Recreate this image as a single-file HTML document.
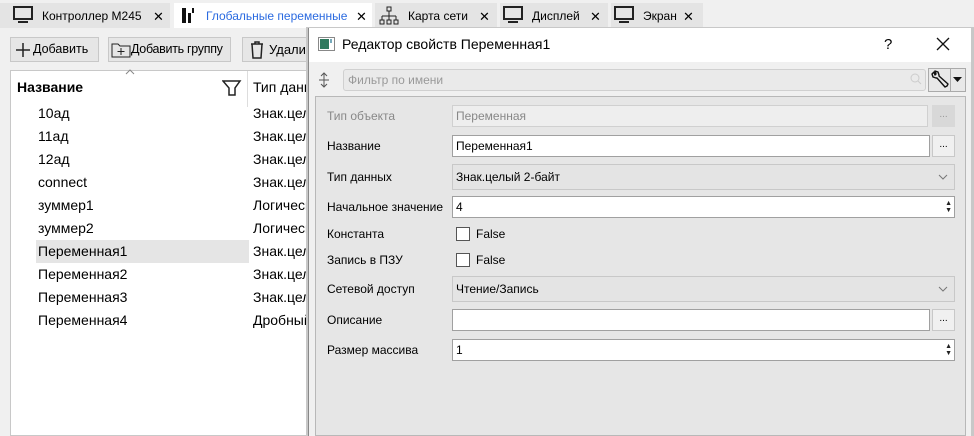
<!DOCTYPE html>
<html><head><meta charset="utf-8"><style>
*{box-sizing:border-box;margin:0;padding:0}
body{width:974px;height:436px;overflow:hidden;background:#f0f0f0;font-family:"Liberation Sans","DejaVu Sans",sans-serif;font-size:13px;color:#000;position:relative}
.abs{position:absolute}
.tab{position:absolute;top:3px;height:25px;background:#e4e4e4;font-size:12px;white-space:nowrap}
.tab span{position:absolute;top:6px}
.x{font-weight:bold;font-size:13px}
.btn{position:absolute;top:37px;height:25px;border:1px solid #c8c8c8;background:#e6e6e6;font-size:13px;line-height:23px;white-space:nowrap;overflow:hidden}
.btn span.t{position:absolute;top:0}
.row{position:absolute;left:38px;font-size:14px}
.c2{position:absolute;left:253px;font-size:14px}
.lbl{position:absolute;left:327px;font-size:12px}
.fld{position:absolute;left:452px;height:22px;border:1px solid #a0a0a0;background:#fff;font-size:12px;padding-left:3px;line-height:20px}
.dots{position:absolute;left:932px;width:23px;height:22px;border:1px solid #c8c8c8;background:#f0f0f0;font-size:10px;text-align:center;line-height:18px}
.cb{position:absolute;left:456px;width:14px;height:14px;border:1px solid #555;background:#fff}
.spin{position:absolute;right:2px;top:3px;font-size:7px;line-height:7px;color:#222}
</style></head><body>
<div class="abs" style="left:0;top:0;width:974px;height:28px;background:#f0f0f0"></div>
<div class="tab" style="left:0;width:170px">
<svg class="abs" style="left:12px;top:3px" width="22" height="18"><rect x="2" y="1" width="18" height="12" fill="none" stroke="#222" stroke-width="2"/><rect x="6" y="15" width="10" height="2" fill="#222"/></svg>
<span style="left:42px">Контроллер M245</span><span class="x" style="left:153px">✕</span></div>
<div class="tab" style="left:174px;width:198px;background:#fff">
<svg class="abs" style="left:6px;top:4px" width="16" height="18"><rect x="2" y="1" width="4" height="15" fill="#111"/><rect x="8" y="6" width="3" height="10" fill="#111"/><rect x="12" y="1" width="2" height="5" fill="#111"/></svg>
<span style="left:32px;color:#2a6ae0">Глобальные переменные</span><span class="x" style="left:182px">✕</span></div>
<div class="tab" style="left:375px;width:122px">
<svg class="abs" style="left:4px;top:3px" width="20" height="20"><rect x="8" y="1" width="4" height="4" fill="none" stroke="#222"/><path d="M10 5v5M3 10h14M3 10v4M10 10v4M17 10v4" stroke="#222" fill="none"/><rect x="1" y="14" width="4" height="4" fill="none" stroke="#222"/><rect x="8" y="14" width="4" height="4" fill="none" stroke="#222"/><rect x="15" y="14" width="4" height="4" fill="none" stroke="#222"/></svg>
<span style="left:33px">Карта сети</span><span class="x" style="left:104px">✕</span></div>
<div class="tab" style="left:500px;width:108px">
<svg class="abs" style="left:2px;top:3px" width="22" height="18"><rect x="2" y="1" width="18" height="12" fill="none" stroke="#222" stroke-width="2"/><rect x="6" y="15" width="10" height="2" fill="#222"/></svg>
<span style="left:32px">Дисплей</span><span class="x" style="left:90px">✕</span></div>
<div class="tab" style="left:611px;width:92px">
<svg class="abs" style="left:2px;top:3px" width="22" height="18"><rect x="2" y="1" width="18" height="12" fill="none" stroke="#222" stroke-width="2"/><rect x="6" y="15" width="10" height="2" fill="#222"/></svg>
<span style="left:32px">Экран</span><span class="x" style="left:72px">✕</span></div>
<div class="btn" style="left:10px;width:89px"><svg class="abs" style="left:4px;top:4px" width="16" height="16"><path d="M8 1v14M1 8h14" stroke="#222" stroke-width="1.5"/></svg><span class="t" style="left:22px;font-size:12.5px">Добавить</span></div>
<div class="btn" style="left:108px;width:123px"><svg class="abs" style="left:2px;top:4px" width="20" height="16"><path d="M1 2h6l2 2h10v11H1z" fill="none" stroke="#222"/><path d="M10 6v7M6.5 9.5h7" stroke="#222"/></svg><span class="t" style="left:22px;font-size:12.5px;letter-spacing:-0.3px">Добавить группу</span></div>
<div class="btn" style="left:242px;width:80px"><svg class="abs" style="left:6px;top:3px" width="16" height="18"><path d="M2 3h12M6 3V1h4v2M3 3l1 14h8l1-14" fill="none" stroke="#222" stroke-width="1.5"/></svg><span class="t" style="left:26px">Удалить</span></div>
<div class="abs" style="left:10px;top:70px;width:300px;height:366px;background:#fff;border:1px solid #c8c8c8"></div>
<div class="abs" style="left:247px;top:71px;width:1px;height:36px;background:#ddd"></div>
<svg class="abs" style="left:125px;top:69px" width="10" height="6"><path d="M1 5l4-4 4 4" fill="none" stroke="#888"/></svg>
<div class="abs" style="left:17px;top:79px;font-size:14px;font-weight:bold">Название</div>
<svg class="abs" style="left:222px;top:80px" width="20" height="16"><path d="M1 1h17l-5 7v7H7V8z" fill="none" stroke="#222" stroke-width="1.5"/></svg>
<div class="abs" style="left:253px;top:79px;font-size:14px">Тип данных</div>
<div class="abs" style="left:36px;top:240px;width:213px;height:23px;background:#e5e5e5"></div>
<div class="row" style="top:105px">10ад</div><div class="c2" style="top:105px">Знак.целый</div>
<div class="row" style="top:128px">11ад</div><div class="c2" style="top:128px">Знак.целый</div>
<div class="row" style="top:151px">12ад</div><div class="c2" style="top:151px">Знак.целый</div>
<div class="row" style="top:174px">connect</div><div class="c2" style="top:174px">Знак.целый</div>
<div class="row" style="top:197px">зуммер1</div><div class="c2" style="top:197px">Логический</div>
<div class="row" style="top:220px">зуммер2</div><div class="c2" style="top:220px">Логический</div>
<div class="row" style="top:243px">Переменная1</div><div class="c2" style="top:243px">Знак.целый</div>
<div class="row" style="top:266px">Переменная2</div><div class="c2" style="top:266px">Знак.целый</div>
<div class="row" style="top:289px">Переменная3</div><div class="c2" style="top:289px">Знак.целый</div>
<div class="row" style="top:312px">Переменная4</div><div class="c2" style="top:312px">Дробный</div>
<div class="abs" style="left:306px;top:27px;width:668px;height:409px;background:#c8c8c8"></div>
<div class="abs" style="left:308px;top:28px;width:663px;height:408px;background:#f0f0f0;border-left:1px solid #888"></div>
<div class="abs" style="left:309px;top:28px;width:662px;height:34px;background:#fff"></div>
<svg class="abs" style="left:318px;top:37px" width="17" height="14"><rect x="0.5" y="0.5" width="16" height="13" fill="#fff" stroke="#888"/><rect x="2" y="2" width="9" height="10" fill="#2f7a5e"/><rect x="12" y="2" width="2" height="4" fill="#7ab"/></svg>
<div class="abs" style="left:342px;top:36px;font-size:14px">Редактор свойств Переменная1</div>
<div class="abs" style="left:884px;top:36px;font-size:15px">?</div>
<svg class="abs" style="left:936px;top:37px" width="14" height="14"><path d="M1 1l12 12M13 1L1 13" stroke="#111" stroke-width="1.3"/></svg>
<svg class="abs" style="left:318px;top:72px" width="12" height="16"><path d="M6 1v14M3 4l3-3 3 3M3 12l3 3 3-3M1 8h10" fill="none" stroke="#555"/></svg>
<div class="abs" style="left:343px;top:69px;width:583px;height:22px;background:#eaeaea;border:1px solid #d0d0d0;border-radius:3px;font-size:12px;color:#999;padding:3px 0 0 4px">Фильтр по имени</div>
<svg class="abs" style="left:910px;top:73px" width="12" height="12"><circle cx="5" cy="5" r="4" fill="none" stroke="#ccc"/><path d="M8 8l3 3" stroke="#ccc"/></svg>
<div class="abs" style="left:928px;top:68px;width:38px;height:24px;border:1px solid #aaa;background:#e8e8e8"></div>
<div class="abs" style="left:950px;top:69px;width:1px;height:22px;background:#aaa"></div>
<svg class="abs" style="left:930px;top:70px" width="20" height="20"><path d="M4 2L2 4l1 3 3 1 1 0 8 9 2-1 1-2-9-8 0-1-1-3-3-1 1 3-1 1z" fill="none" stroke="#111" stroke-width="1.4" stroke-linejoin="round"/></svg>
<svg class="abs" style="left:953px;top:77px" width="9" height="6"><path d="M0 0h9L4.5 5z" fill="#111"/></svg>
<div class="abs" style="left:315px;top:96px;width:651px;height:340px;background:#e6e6e6;border:1px solid #b8b8b8"></div>
<div class="lbl" style="top:109px;color:#888">Тип объекта</div>
<div class="fld" style="top:105px;width:476px;background:#eeeeee;border-color:#d0d0d0;color:#888">Переменная</div>
<div class="dots" style="top:105px;background:#d8d8d8;border-color:#d8d8d8;color:#999">...</div>
<div class="lbl" style="top:139px">Название</div>
<div class="fld" style="top:135px;width:478px">Переменная1</div>
<div class="dots" style="top:135px">...</div>
<div class="lbl" style="top:170px">Тип данных</div>
<div class="fld" style="top:164px;width:503px;height:26px;line-height:24px;background:#e4e4e4;border-color:#c8c8c8">Знак.целый 2-байт<svg style="position:absolute;right:6px;top:9px" width="10" height="6"><path d="M1 1l4 4 4-4" fill="none" stroke="#777"/></svg></div>
<div class="lbl" style="top:200px">Начальное значение</div>
<div class="fld" style="top:196px;width:503px">4<span class="spin">▲<br>▼</span></div>
<div class="lbl" style="top:227px">Константа</div>
<div class="cb" style="top:227px"></div><div class="abs" style="left:476px;top:227px;font-size:12px">False</div>
<div class="lbl" style="top:253px">Запись в ПЗУ</div>
<div class="cb" style="top:253px"></div><div class="abs" style="left:476px;top:253px;font-size:12px">False</div>
<div class="lbl" style="top:282px">Сетевой доступ</div>
<div class="fld" style="top:276px;width:503px;height:26px;line-height:24px;background:#e4e4e4;border-color:#c8c8c8">Чтение/Запись<svg style="position:absolute;right:6px;top:9px" width="10" height="6"><path d="M1 1l4 4 4-4" fill="none" stroke="#777"/></svg></div>
<div class="lbl" style="top:313px">Описание</div>
<div class="fld" style="top:309px;width:478px"></div>
<div class="dots" style="top:309px">...</div>
<div class="lbl" style="top:343px">Размер массива</div>
<div class="fld" style="top:339px;width:503px">1<span class="spin">▲<br>▼</span></div>
</body></html>
